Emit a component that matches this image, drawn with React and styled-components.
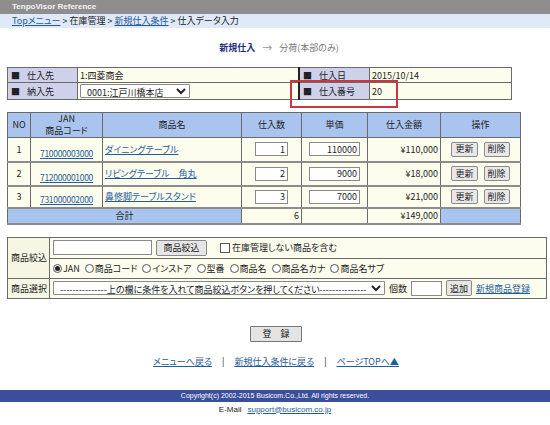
import React from 'react'
import styled, { createGlobalStyle } from 'styled-components'

const colors = {
  gray: '#8e8e8e',
  crumb: '#dfe9f8',
  lavender: '#cfd0ea',
  cream: '#fdfdee',
  blue: '#a9c5ef',
  link: '#1f5c9c',
  navy: '#3a4e9c',
  border: '#6a6a6a'
}

const rows = [
  { no: 1, jan: '710000003000', name: 'ダイニングテーブル', qty: 1, price: 110000, amount: '¥110,000' },
  { no: 2, jan: '712000001000', name: 'リビングテーブル　角丸', qty: 2, price: 9000, amount: '¥18,000' },
  { no: 3, jan: '731000002000', name: '鼻修脚テーブルスタンド', qty: 3, price: 7000, amount: '¥21,000' }
]

const searchTypes = ['JAN', '商品コード', 'インストア', '型番', '商品名', '商品名カナ', '商品名サブ']

const App = () =>
  <Page>
    <GlobalStyle />
    <TopBar>TenpoVisor Reference</TopBar>
    <Crumb>
      <Link href="#">Topメニュー</Link> &gt; 在庫管理 &gt; <Link href="#">新規仕入条件</Link> &gt; 仕入データ入力
    </Crumb>
    <Steps>
      <StepActive>新規仕入</StepActive>
      <StepArrow>→</StepArrow>
      <span>分荷(本部のみ)</span>
    </Steps>

    <InfoWrap>
      <InfoTable>
        <tbody>
          <InfoRow $h={15}>
            <InfoLabel>■<LabelText>仕入先</LabelText></InfoLabel>
            <InfoValue $w={218}>1:四菱商会</InfoValue>
            <InfoLabel $divider>■<LabelText>仕入日</LabelText></InfoLabel>
            <InfoValue>2015/10/14</InfoValue>
          </InfoRow>
          <InfoRow $h={17}>
            <InfoLabel>■<LabelText>納入先</LabelText></InfoLabel>
            <InfoValue $w={218}>
              <Select $w={110} defaultValue="1">
                <option value="1">0001:江戸川橋本店</option>
              </Select>
            </InfoValue>
            <InfoLabel $divider>■<LabelText>仕入番号</LabelText></InfoLabel>
            <InfoValue>20</InfoValue>
          </InfoRow>
        </tbody>
      </InfoTable>
      <Highlight />
    </InfoWrap>

    <MainTable>
      <colgroup>
        <col style={{ width: 23 }} />
        <col style={{ width: 72 }} />
        <col style={{ width: 139 }} />
        <col style={{ width: 60 }} />
        <col style={{ width: 66 }} />
        <col style={{ width: 73 }} />
        <col style={{ width: 80 }} />
      </colgroup>
      <thead>
        <tr>
          <Th>NO</Th>
          <Th>JAN<br />商品コード</Th>
          <Th>商品名</Th>
          <Th>仕入数</Th>
          <Th>単価</Th>
          <Th>仕入金額</Th>
          <Th>操作</Th>
        </tr>
      </thead>
      <tbody>
        {rows.map(r =>
          <BodyRow key={r.no} $h={r.no === 3 ? 22 : 24}>
            <Td $align="center">{r.no}</Td>
            <Td $align="center" $valign="bottom"><JanLink href="#">{r.jan}</JanLink></Td>
            <Td><Link href="#">{r.name}</Link></Td>
            <Td $align="center"><NumInput $w={33} defaultValue={r.qty} /></Td>
            <Td $align="center"><NumInput $w={51} defaultValue={r.price} /></Td>
            <Td $align="right">{r.amount}</Td>
            <Td $align="center">
              <SmallButton>更新</SmallButton>
              <SmallButton>削除</SmallButton>
            </Td>
          </BodyRow>
        )}
        <TotalRow>
          <Td colSpan={3} $align="center" $bg={colors.blue}>合計</Td>
          <Td $align="right">6</Td>
          <Td />
          <Td $align="right">¥149,000</Td>
          <Td $bg={colors.blue} />
        </TotalRow>
      </tbody>
    </MainTable>

    <SearchTable>
      <tbody>
        <SearchRow $h={21}>
          <SearchLabel rowSpan={2}>商品絞込</SearchLabel>
          <SearchCell>
            <Inline>
              <TextInput $w={99} />
              <FormButton $w={51}>商品絞込</FormButton>
              <Check><Box />在庫管理しない商品を含む</Check>
            </Inline>
          </SearchCell>
        </SearchRow>
        <SearchRow $h={20}>
          <SearchCell>
            <Inline $gap={5}>
              {searchTypes.map((t, i) =>
                <Radio key={t}><RadioDot $on={i === 0} />{t}</Radio>
              )}
            </Inline>
          </SearchCell>
        </SearchRow>
        <SearchRow $h={20}>
          <SearchLabel>商品選択</SearchLabel>
          <SearchCell>
            <Inline>
              <Select $w={332} defaultValue="0">
                <option value="0">---------------上の欄に条件を入れて商品絞込ボタンを押してください---------------</option>
              </Select>
              <span>個数</span>
              <TextInput $w={31} />
              <FormButton $w={26}>追加</FormButton>
              <Link href="#">新規商品登録</Link>
            </Inline>
          </SearchCell>
        </SearchRow>
      </tbody>
    </SearchTable>

    <Actions>
      <RegisterButton>登　録</RegisterButton>
    </Actions>

    <NavLinks>
      <Link href="#">メニューへ戻る</Link>
      <Sep>|</Sep>
      <Link href="#">新規仕入条件に戻る</Link>
      <Sep>|</Sep>
      <Link href="#">ページTOPへ▲</Link>
    </NavLinks>

    <Footer>Copyright(c) 2002-2015 Busicom.Co.,Ltd. All rights reserved.</Footer>
    <Mail>
      E-Mail<MailLink href="#">support@busicom.co.jp</MailLink>
    </Mail>
  </Page>

export default App

const GlobalStyle = createGlobalStyle`
  body {
    margin: 0;
    background: #fff;
    color: #222;
    font-family: "Noto Sans CJK JP", "Noto Sans", sans-serif;
    font-size: 9px;
    font-feature-settings: "palt";
  }
  input, select, button {
    font-family: inherit;
    font-feature-settings: "palt";
  }
`

const Page = styled.div`
  width: 550px;
  min-height: 425px;
`

const TopBar = styled.div`
  height: 14px;
  line-height: 14px;
  padding-left: 12px;
  background: ${colors.gray};
  color: #f4f4f4;
  font-family: "Liberation Sans", Arial, sans-serif;
  font-weight: bold;
  font-size: 8px;
`

const Crumb = styled.div`
  height: 14px;
  line-height: 14px;
  padding-left: 12px;
  background: ${colors.crumb};
  font-size: 9px;
`

const Link = styled.a`
  color: ${colors.link};
  text-decoration: underline;
`

const Steps = styled.div`
  height: 39px;
  display: flex;
  align-items: center;
  justify-content: center;
  gap: 7px;
  padding-left: 8px;
  color: #777;
  font-size: 9px;
`

const StepActive = styled.span`
  color: #1e2f80;
  font-weight: bold;
`

const StepArrow = styled.span`
  color: #999;
  font-size: 10px;
`

const InfoWrap = styled.div`
  position: relative;
  margin-left: 7px;
  width: 505px;
`

const InfoTable = styled.table`
  width: 505px;
  border-collapse: collapse;
  border: 1px solid #555;
  td {
    border: 1px solid ${colors.border};
  }
`

const InfoRow = styled.tr`
  height: ${p => p.$h}px;
`

const InfoLabel = styled.td`
  width: 66px;
  padding: 0 0 0 3px;
  background: ${colors.lavender};
  font-size: 9px;
  border-left: ${p => p.$divider ? '2px solid #222' : undefined} !important;
`

const LabelText = styled.span`
  margin-left: 7px;
`

const InfoValue = styled.td`
  width: ${p => p.$w ? `${p.$w}px` : 'auto'};
  padding: 0 0 0 2px;
  background: ${colors.cream};
  font-size: 9px;
`

const Highlight = styled.div`
  position: absolute;
  left: 283px;
  top: 13px;
  width: 104px;
  height: 24px;
  border: 2px solid #c8383c;
  pointer-events: none;
`

const Select = styled.select`
  width: ${p => p.$w}px;
  height: 14px;
  padding: 0 0 0 2px;
  border: 1px solid #8a8a8a;
  border-radius: 1px;
  background: #fff;
  font-size: 9px;
  color: #222;
`

const MainTable = styled.table`
  margin: 12px 0 0 7px;
  width: 513px;
  table-layout: fixed;
  border-collapse: collapse;
  border: 1px solid #333;
`

const Th = styled.th`
  height: 23px;
  padding: 0;
  background: ${colors.blue};
  border: 1px solid ${colors.border};
  font-weight: normal;
  font-size: 9px;
  line-height: 12px;
`

const BodyRow = styled.tr`
  height: ${p => p.$h}px;
`

const TotalRow = styled.tr`
  height: 16px;
`

const Td = styled.td`
  padding: ${p => p.$valign === 'bottom' ? '0 0 2px' : '0 2px'};
  text-align: ${p => p.$align || 'left'};
  vertical-align: ${p => p.$valign || 'middle'};
  background: ${p => p.$bg || colors.cream};
  border: 1px solid ${colors.border};
  border-bottom-color: #8c8c8c;
  border-bottom-width: 2px;
  font-size: 9px;
  line-height: 11px;
  white-space: nowrap;
  overflow: hidden;
`

const JanLink = styled(Link)`
  font-size: 8.5px;
  letter-spacing: -0.3px;
`

const NumInput = styled.input`
  box-sizing: border-box;
  width: ${p => p.$w}px;
  height: 14px;
  padding: 0 2px;
  border: 1px solid #8a8a8a;
  text-align: right;
  font-size: 9px;
  color: #222;
`

const SmallButton = styled.button`
  height: 15px;
  margin: 0 3px;
  padding: 0 3px;
  border: 1px solid #8a8a8a;
  border-radius: 2px;
  background: #e8e8e8;
  font-size: 9px;
  color: #222;
  line-height: 12px;
`

const SearchTable = styled.table`
  margin: 12px 0 0 7px;
  width: 540px;
  border-collapse: collapse;
  border: 1px solid #333;
`

const SearchRow = styled.tr`
  height: ${p => p.$h}px;
`

const SearchLabel = styled.td`
  width: 38px;
  padding: 0 0 0 3px;
  background: #f6f6e4;
  border: 1px solid ${colors.border};
  font-size: 9px;
  white-space: nowrap;
`

const SearchCell = styled.td`
  padding: 0 0 0 3px;
  background: ${colors.cream};
  border: 1px solid ${colors.border};
`

const Inline = styled.div`
  display: flex;
  align-items: center;
  gap: ${p => p.$gap ?? 4}px;
  font-size: 9px;
  white-space: nowrap;
`

const TextInput = styled.input`
  box-sizing: border-box;
  width: ${p => p.$w}px;
  height: 15px;
  padding: 0 2px;
  border: 1px solid #8a8a8a;
  font-size: 9px;
`

const FormButton = styled.button`
  box-sizing: border-box;
  width: ${p => p.$w}px;
  height: 16px;
  padding: 0;
  border: 1px solid #8a8a8a;
  border-radius: 2px;
  background: #e6e6e6;
  font-size: 9px;
  color: #222;
`

const Check = styled.label`
  display: flex;
  align-items: center;
  gap: 2px;
  margin-left: 9px;
`

const Box = styled.span`
  width: 8px;
  height: 8px;
  border: 1px solid #555;
  background: #fff;
`

const Radio = styled.label`
  display: flex;
  align-items: center;
  gap: 1px;
`

const RadioDot = styled.span`
  box-sizing: border-box;
  width: 9px;
  height: 9px;
  border: 1px solid #555;
  border-radius: 50%;
  background: #fff;
  display: flex;
  align-items: center;
  justify-content: center;
  &::after {
    content: '';
    width: 5px;
    height: 5px;
    border-radius: 50%;
    background: ${p => p.$on ? '#222' : 'transparent'};
  }
`

const Actions = styled.div`
  display: flex;
  justify-content: center;
  margin-top: 27px;
  padding-left: 2px;
`

const RegisterButton = styled.button`
  width: 52px;
  height: 16px;
  padding: 0;
  border: 1px solid #777;
  border-radius: 1px;
  background: #e4e4e4;
  font-size: 9px;
  color: #222;
`

const NavLinks = styled.div`
  display: flex;
  justify-content: center;
  align-items: center;
  gap: 10px;
  margin-top: 14px;
  height: 12px;
  font-size: 9px;
  padding-left: 2px;
`

const Sep = styled.span`
  color: #222;
`

const Footer = styled.div`
  margin-top: 22px;
  height: 12px;
  line-height: 12px;
  background: ${colors.navy};
  color: #fff;
  text-align: center;
  font-family: "Liberation Sans", Arial, sans-serif;
  font-size: 7px;
`

const Mail = styled.div`
  margin-top: 3px;
  text-align: center;
  font-family: "Liberation Sans", Arial, sans-serif;
  font-size: 8px;
  color: #222;
`

const MailLink = styled(Link)`
  margin-left: 6px;
`
